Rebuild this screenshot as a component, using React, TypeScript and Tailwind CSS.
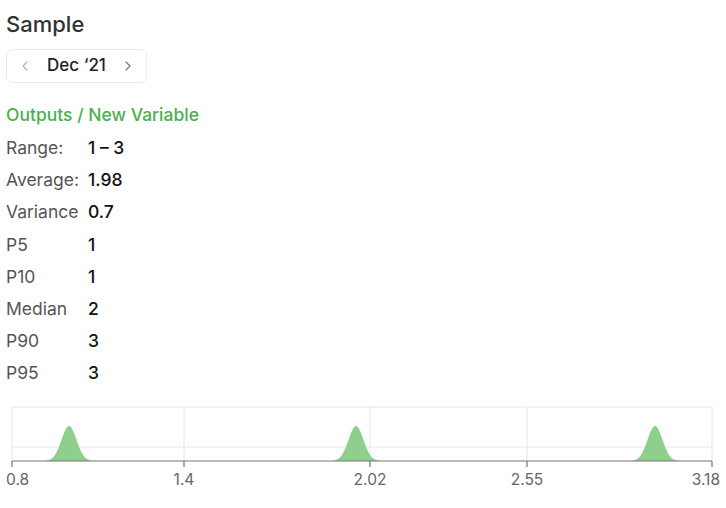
import { ChevronLeft, ChevronRight } from "lucide-react";

const stats: [string, string][] = [
  ["Range:", "1 – 3"],
  ["Average:", "1.98"],
  ["Variance", "0.7"],
  ["P5", "1"],
  ["P10", "1"],
  ["Median", "2"],
  ["P90", "3"],
  ["P95", "3"],
];

const ticks = [
  { x: 12, label: "0.8", anchor: "start" as const, tx: 6 },
  { x: 184, label: "1.4", anchor: "middle" as const, tx: 184 },
  { x: 370, label: "2.02", anchor: "middle" as const, tx: 370 },
  { x: 527, label: "2.55", anchor: "middle" as const, tx: 527 },
  { x: 712, label: "3.18", anchor: "end" as const, tx: 720 },
];

const peaks = [69, 356, 655];

function bellPath(center: number, base: number, height: number, sigma: number) {
  const pts: string[] = [];
  for (let dx = -24; dx <= 24; dx += 1) {
    const y = base - height * Math.exp(-(dx * dx) / (2 * sigma * sigma));
    pts.push(`${center + dx},${y.toFixed(2)}`);
  }
  return `M${center - 24},${base} L${pts.join(" L")} L${center + 24},${base} Z`;
}

export default function App() {
  return (
    <div className="h-[508px] w-[726px] overflow-hidden bg-white font-['Inter',sans-serif] text-[#333]">
      <div className="pl-1.5">
        <h1 className="h-[49px] text-[22px] font-medium leading-[48px] text-[#333]">Sample</h1>

        <div className="flex h-[34px] w-[141px] items-center justify-between rounded-md border border-[#ececec] px-2.5">
          <ChevronLeft size={16} strokeWidth={1.75} className="text-[#b0b0b0]" aria-hidden="true" />
          <span className="text-[17px] font-medium text-[#222]">Dec ‘21</span>
          <ChevronRight size={16} strokeWidth={1.75} className="text-[#777]" aria-hidden="true" />
        </div>

        <p className="mt-4 h-[33px] text-[17.5px] font-medium leading-8 text-[#4caf50]">Outputs / New Variable</p>

        <div>
          {stats.map(([label, value]) => (
            <div key={label} className="flex h-[32.2px] items-center text-[17.5px]">
              <span className="w-[82px] text-[#555]">{label}</span>
              <span className="font-medium text-[#111]">{value}</span>
            </div>
          ))}
        </div>
      </div>

      <svg className="mt-[9px] block" width="726" height="108" viewBox="0 0 726 108">
        <line x1="12" y1="8" x2="712" y2="8" stroke="#e6e6e6" strokeWidth="1" />
        <line x1="12" y1="48" x2="712" y2="48" stroke="#e6e6e6" strokeWidth="1" />
        {ticks.map((t) => (
          <line key={`g${t.x}`} x1={t.x} y1="8" x2={t.x} y2="62" stroke="#e6e6e6" strokeWidth="1" />
        ))}
        {peaks.map((c) => (
          <path key={c} d={bellPath(c, 62, 35, 7.5)} fill="#8fcf8c" />
        ))}
        <line x1="12" y1="62" x2="712" y2="62" stroke="#777" strokeWidth="1.2" />
        {ticks.map((t) => (
          <g key={t.x}>
            <line x1={t.x} y1="62" x2={t.x} y2="68" stroke="#777" strokeWidth="1.2" />
            <text
              x={t.tx}
              y="86"
              textAnchor={t.anchor}
              fontSize="15.5"
              fill="#666"
              fontFamily="Inter, sans-serif"
            >
              {t.label}
            </text>
          </g>
        ))}
      </svg>
    </div>
  );
}
